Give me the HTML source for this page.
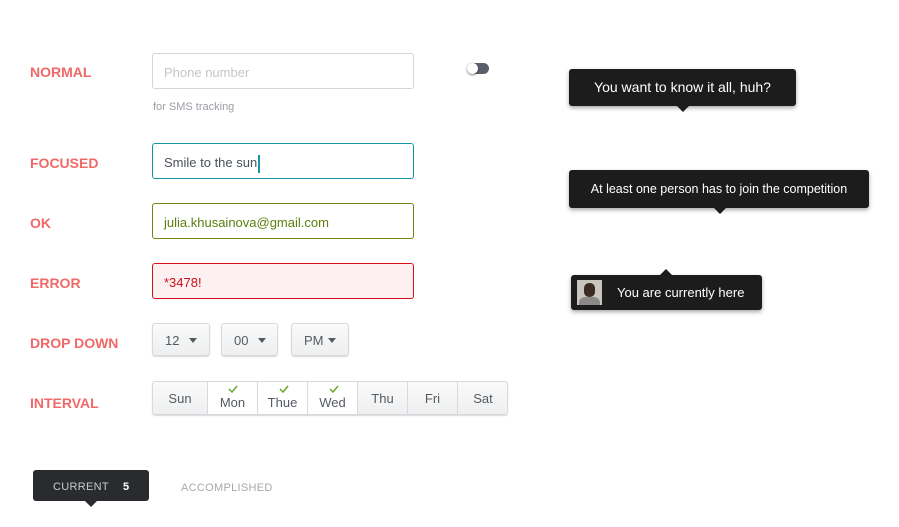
<!DOCTYPE html>
<html><head><style>
body{margin:0;width:899px;height:527px;background:#fff;font-family:"Liberation Sans",sans-serif;position:relative;overflow:hidden}
.a{position:absolute;box-sizing:border-box}
.lbl{position:absolute;left:30px;color:#f06868;font-weight:bold;font-size:14px}
.inp{position:absolute;left:152px;width:262px;height:36px;box-sizing:border-box;border-radius:3px;font-size:13px;padding-left:11px;line-height:37px}
.dd{position:absolute;top:323px;height:33px;box-sizing:border-box;border:1px solid #d7d9dc;border-radius:3px;background:linear-gradient(#fafafa,#eeeff0);box-shadow:0 1px 1px rgba(0,0,0,.15);font-size:13px;color:#555a63;line-height:33px;padding-left:12px}
.dd i{position:absolute;top:14px;width:0;height:0;border-left:4px solid transparent;border-right:4px solid transparent;border-top:5px solid #555a63}
.cell{position:absolute;top:0;height:100%;border-right:1px solid #d7d9dc;text-align:center;font-size:13px;color:#555a63;box-sizing:border-box}
.tip{position:absolute;background:#1c1c1c;color:#fff;border-radius:3px;box-shadow:0 2px 4px rgba(0,0,0,.35)}
</style></head><body>
<div class="lbl" style="top:64px">NORMAL</div>
<div class="lbl" style="top:155px">FOCUSED</div>
<div class="lbl" style="top:215px">OK</div>
<div class="lbl" style="top:275px">ERROR</div>
<div class="lbl" style="top:335px">DROP DOWN</div>
<div class="lbl" style="top:395px">INTERVAL</div>

<div class="inp" style="top:53px;border:1px solid #d3d5d8;color:#c3c6cb">Phone number</div>
<div class="a" style="left:153px;top:101px;font-size:11px;color:#9a9ea4">for SMS tracking</div>
<div class="a" style="left:467px;top:63px;width:22px;height:11px;border-radius:6px;background:#5a5f6b"></div>
<div class="a" style="left:467px;top:63px;width:11px;height:11px;border-radius:50%;background:#fff;box-shadow:0 1px 2px rgba(0,0,0,.5)"></div>

<div class="inp" style="top:143px;border:1px solid #1793a8;color:#4a4f5a">Smile to the sun<span style="display:inline-block;width:2px;height:18px;background:#1793a8;vertical-align:middle;margin-left:1px"></span></div>
<div class="inp" style="top:203px;border:1px solid #6c8a10;color:#5e7d0c">julia.khusainova@gmail.com</div>
<div class="inp" style="top:263px;border:1px solid #d40f1b;background:#fdf0f0;color:#c8101a">*3478!</div>

<div class="dd" style="left:152px;width:58px">12<i style="left:36px"></i></div>
<div class="dd" style="left:221px;width:57px">00<i style="left:36px"></i></div>
<div class="dd" style="left:291px;width:58px">PM<i style="left:36px"></i></div>

<div class="a" style="left:152px;top:381px;width:356px;height:34px;border:1px solid #d7d9dc;border-radius:3px;background:linear-gradient(#fafafa,#eeeff0);box-shadow:0 1px 1px rgba(0,0,0,.15);overflow:hidden">
<div class="cell" style="left:0;width:55px;line-height:33px">Sun</div>
<div class="cell" style="left:55px;width:50px;background:#fff;padding-top:13px">Mon</div>
<div class="cell" style="left:105px;width:50px;background:#fff;padding-top:13px">Thue</div>
<div class="cell" style="left:155px;width:50px;background:#fff;padding-top:13px">Wed</div>
<div class="cell" style="left:205px;width:50px;line-height:33px">Thu</div>
<div class="cell" style="left:255px;width:50px;line-height:33px">Fri</div>
<div class="cell" style="left:305px;width:50px;border:0;line-height:33px">Sat</div>
</div>
<svg class="a" style="left:0;top:0" width="899" height="527"><g fill="none" stroke="#6aaa2a" stroke-width="1.5"><path d="M229 389l3 3 5-6"/><path d="M280 389l3 3 5-6"/><path d="M330 389l3 3 5-6"/></g></svg>

<div class="tip" style="left:569px;top:69px;width:227px;height:37px;font-size:14px;line-height:37px;text-align:center">You want to know it all, huh?</div>
<div class="a" style="left:677px;top:106px;border-left:6px solid transparent;border-right:6px solid transparent;border-top:6px solid #1c1c1c"></div>
<div class="tip" style="left:569px;top:170px;width:300px;height:38px;font-size:12.5px;line-height:38px;text-align:center">At least one person has to join the competition</div>
<div class="a" style="left:714px;top:208px;border-left:6px solid transparent;border-right:6px solid transparent;border-top:6px solid #1c1c1c"></div>
<div class="a" style="left:660px;top:269px;border-left:6px solid transparent;border-right:6px solid transparent;border-bottom:6px solid #1c1c1c"></div>
<div class="tip" style="left:571px;top:275px;width:191px;height:35px;font-size:13px;line-height:36px;padding-left:46px;box-sizing:border-box">You are currently here</div>
<div class="a" style="left:577px;top:280px;width:25px;height:25px;background:#c9c6c0;overflow:hidden"><div class="a" style="left:7px;top:3px;width:11px;height:14px;border-radius:5px;background:#3a2a22"></div><div class="a" style="left:2px;top:17px;width:21px;height:10px;border-radius:6px 6px 0 0;background:#8a8a8a"></div></div>

<div class="a" style="left:33px;top:470px;width:116px;height:31px;background:#2a2b2e;border-radius:3px"></div>
<div class="a" style="left:85px;top:501px;border-left:6px solid transparent;border-right:6px solid transparent;border-top:6px solid #2a2b2e"></div>
<div class="a" style="left:53px;top:481px;font-size:11px;color:#c8cacd;letter-spacing:.3px">CURRENT</div>
<div class="a" style="left:123px;top:481px;font-size:11px;color:#fff;font-weight:bold">5</div>
<div class="a" style="left:181px;top:482px;font-size:11px;color:#a5a8ad;letter-spacing:.3px">ACCOMPLISHED</div>
</body></html>
